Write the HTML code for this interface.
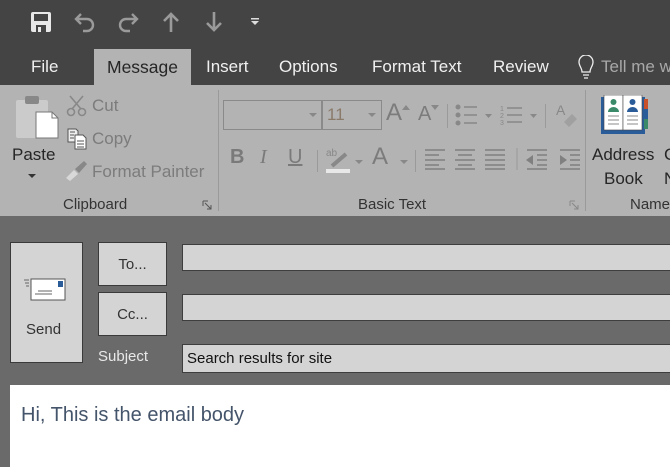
<!DOCTYPE html>
<html><head><meta charset="utf-8"><style>
*{margin:0;padding:0;box-sizing:border-box}
body{width:670px;height:465px;overflow:hidden;background:#6a6a6a;font-family:"Segoe UI","Liberation Sans",sans-serif;position:relative}
.a{position:absolute}
.top{left:0;top:0;width:670px;height:85px;background:#444}
.tab{top:57px;font-size:17px;color:#f0f0f0;white-space:nowrap}
.rib{left:0;top:85px;width:670px;height:131px;background:#b3b3b3}
.g{color:#7c7c7c;font-size:17px;white-space:nowrap}
.d{color:#262626;font-size:17px;white-space:nowrap}
.sep{width:1px;background:#9a9a9a}
.box{background:#d4d4d4;border:1px solid #3e3e3e}
.btn{background:#d4d4d4;border:1px solid #3a3a3a;color:#333;font-size:15px;text-align:center}
</style></head><body>
<div class="a top"></div>
<svg class="a" style="left:30px;top:11px" width="22" height="22" viewBox="0 0 22 22"><rect x="1" y="1" width="20" height="20" rx="2" fill="#e8e8e8"/><rect x="4" y="3" width="14" height="7" fill="#444"/><rect x="6" y="14" width="10" height="7" fill="#444"/><rect x="8" y="16" width="3" height="5" fill="#e8e8e8"/></svg>
<svg class="a" style="left:73px;top:11px" width="24" height="22" viewBox="0 0 24 22"><path d="M8 3 L3 8 L8 13 M3 8 H14 a6 6 0 0 1 0 12 H10" fill="none" stroke="#9a9a9a" stroke-width="2.4"/></svg>
<svg class="a" style="left:116px;top:11px" width="24" height="22" viewBox="0 0 24 22"><path d="M16 3 L21 8 L16 13 M21 8 H10 a6 6 0 0 0 0 12 H14" fill="none" stroke="#9a9a9a" stroke-width="2.4"/></svg>
<svg class="a" style="left:162px;top:11px" width="18" height="22" viewBox="0 0 18 22"><path d="M9 21 V3 M2 10 L9 3 L16 10" fill="none" stroke="#9a9a9a" stroke-width="2.6"/></svg>
<svg class="a" style="left:205px;top:11px" width="18" height="22" viewBox="0 0 18 22"><path d="M9 1 V19 M2 12 L9 19 L16 12" fill="none" stroke="#9a9a9a" stroke-width="2.6"/></svg>
<svg class="a" style="left:250px;top:18px" width="10" height="8" viewBox="0 0 10 8"><rect x="1" y="0" width="8" height="1.5" fill="#ddd"/><path d="M1 3 H9 L5 7Z" fill="#ddd"/></svg>
<div class="a" style="left:94px;top:49px;width:97px;height:37px;background:#b3b3b3"></div>
<div class="a tab" style="left:31px">File</div>
<div class="a tab" style="left:107px;color:#262626;font-size:17.5px">Message</div>
<div class="a tab" style="left:206px">Insert</div>
<div class="a tab" style="left:279px">Options</div>
<div class="a tab" style="left:372px">Format Text</div>
<div class="a tab" style="left:493px">Review</div>
<svg class="a" style="left:577px;top:55px" width="18" height="24" viewBox="0 0 18 24"><path d="M5 17 C5 13 2 11 2 7 a7 7 0 0 1 14 0 c0 4 -3 6 -3 10 Z M6 20 H12 M7 23 H11" fill="none" stroke="#eee" stroke-width="1.3"/></svg>
<div class="a tab" style="left:601px;color:#a8a8a8">Tell me w</div>
<div class="a rib"></div>
<svg class="a" style="left:14px;top:94px" width="46" height="46" viewBox="0 0 46 46"><rect x="2" y="6" width="32" height="38" rx="2" fill="#cbcbcb"/><rect x="11" y="2" width="14" height="8" rx="2" fill="#888"/><path d="M22 18 H38 L44 24 V44 H22Z" fill="#fff" stroke="#777"/><path d="M38 18 V24 H44" fill="none" stroke="#777"/></svg>
<div class="a d" style="left:12px;top:145px">Paste</div>
<svg class="a" style="left:28px;top:174px" width="8" height="5"><path d="M0 0 H8 L4 4Z" fill="#333"/></svg>
<svg class="a" style="left:66px;top:95px" width="22" height="22" viewBox="0 0 22 22"><circle cx="5" cy="17" r="3.5" fill="none" stroke="#888" stroke-width="1.6"/><circle cx="16" cy="17" r="3.5" fill="none" stroke="#888" stroke-width="1.6"/><path d="M6 14 L17 1 M15 14 L4 1" stroke="#888" stroke-width="1.6"/></svg>
<div class="a g" style="left:92px;top:96px">Cut</div>
<svg class="a" style="left:66px;top:128px" width="22" height="22" viewBox="0 0 22 22"><path d="M2 1 H10 L12 3 V14 H2Z" fill="#eee" stroke="#555"/><path d="M9 7 H17 L20 10 V21 H9Z" fill="#fff" stroke="#555"/><path d="M4 4H9M4 7H8M4 10H8M11 13H18M11 16H18M11 19H18" stroke="#555"/></svg>
<div class="a g" style="left:92px;top:129px">Copy</div>
<svg class="a" style="left:65px;top:160px" width="24" height="22" viewBox="0 0 24 22"><path d="M1 18 L9 10 L13 14 L5 21Z" fill="#d8d8d8"/><path d="M10 9 L19 1 L22 4 L14 13Z" fill="#888"/></svg>
<div class="a g" style="left:92px;top:162px">Format Painter</div>
<div class="a d" style="left:63px;top:196px;font-size:15px;color:#333">Clipboard</div>
<svg class="a" style="left:202px;top:200px" width="10" height="10"><path d="M1 1H6M1 1V6M3 3L9 9M9 5V9H5" fill="none" stroke="#555"/></svg>
<div class="a sep" style="left:218px;top:90px;height:121px"></div>
<div class="a" style="left:223px;top:100px;width:99px;height:30px;border:1px solid #8a8a8a"></div>
<svg class="a" style="left:309px;top:113px" width="8" height="5"><path d="M0 0H8L4 4Z" fill="#888"/></svg>
<div class="a" style="left:322px;top:100px;width:60px;height:30px;border:1px solid #8a8a8a"></div>
<div class="a g" style="left:327px;top:105px;color:#8a7a6a">11</div>
<svg class="a" style="left:368px;top:113px" width="8" height="5"><path d="M0 0H8L4 4Z" fill="#888"/></svg>
<div class="a g" style="left:386px;top:99px;font-size:24px">A</div><svg class="a" style="left:402px;top:105px" width="8" height="5"><path d="M0 5L4 0L8 5Z" fill="#888"/></svg>
<div class="a g" style="left:418px;top:103px;font-size:20px">A</div><svg class="a" style="left:431px;top:105px" width="8" height="5"><path d="M0 0H8L4 5Z" fill="#888"/></svg>
<div class="a sep" style="left:447px;top:104px;height:24px"></div>
<svg class="a" style="left:455px;top:104px" width="40" height="22" viewBox="0 0 40 22"><g fill="#888"><circle cx="3" cy="3" r="2.5"/><circle cx="3" cy="11" r="2.5"/><circle cx="3" cy="19" r="2.5"/></g><path d="M9 3H22M9 11H22M9 19H22" stroke="#888" stroke-width="1.5"/><path d="M30 10H37L33.5 14Z" fill="#888"/></svg>
<svg class="a" style="left:500px;top:103px" width="40" height="24" viewBox="0 0 40 24"><text x="0" y="8" font-size="7" fill="#888" font-family="Liberation Sans">1</text><text x="0" y="15" font-size="7" fill="#888" font-family="Liberation Sans">2</text><text x="0" y="22" font-size="7" fill="#888" font-family="Liberation Sans">3</text><path d="M7 5H22M7 12H22M7 19H22" stroke="#888" stroke-width="1.5"/><path d="M30 11H37L33.5 15Z" fill="#888"/></svg>
<div class="a sep" style="left:545px;top:104px;height:24px"></div>
<svg class="a" style="left:556px;top:102px" width="22" height="26" viewBox="0 0 22 26"><text x="0" y="13" font-size="14" fill="#888" font-family="Liberation Sans">A</text><path d="M8 20 L16 12 L21 17 L13 25Z" fill="#a0a0a0"/></svg>
<div class="a" style="left:230px;top:146px;font-size:20px;font-weight:bold;color:#7a7a7a">B</div>
<div class="a" style="left:260px;top:146px;font-size:20px;font-style:italic;font-family:'Liberation Serif',serif;color:#7a7a7a">I</div>
<div class="a" style="left:288px;top:146px;font-size:20px;text-decoration:underline;color:#7a7a7a">U</div>
<div class="a sep" style="left:317px;top:150px;height:22px"></div>
<svg class="a" style="left:326px;top:146px" width="26" height="28" viewBox="0 0 26 28"><text x="0" y="10" font-size="10" fill="#888" font-family="Liberation Sans">ab</text><path d="M6 20 L20 8" stroke="#888" stroke-width="4"/><rect x="0" y="23" width="24" height="4" fill="#e8e8e8"/></svg>
<svg class="a" style="left:355px;top:160px" width="8" height="5"><path d="M0 0H8L4 4Z" fill="#888"/></svg>
<div class="a g" style="left:372px;top:143px;font-size:24px">A</div>
<svg class="a" style="left:400px;top:160px" width="8" height="5"><path d="M0 0H8L4 4Z" fill="#888"/></svg>
<div class="a sep" style="left:415px;top:150px;height:22px"></div>
<svg class="a" style="left:425px;top:148px" width="160" height="22" viewBox="0 0 160 22"><g stroke="#808080" stroke-width="1.4"><path d="M0 2H20M0 7H14M0 12H20M0 17H14M0 21H20"/><path d="M30 2H50M33 7H47M30 12H50M33 17H47M30 21H50"/><path d="M60 2H80M60 7H80M60 12H80M60 17H80M60 21H80"/><path d="M102 2H122M112 7H122M112 12H122M112 17H122M102 21H122"/><path d="M135 2H155M145 7H155M145 12H155M145 17H155M135 21H155"/></g><path d="M101 12L108 7V17Z" fill="#808080"/><path d="M142 12L135 7V17Z" fill="#808080"/><line x1="92" y1="0" x2="92" y2="22" stroke="#9a9a9a"/></svg>
<div class="a d" style="left:358px;top:196px;font-size:15px;color:#333">Basic Text</div>
<svg class="a" style="left:569px;top:200px" width="10" height="10"><path d="M1 1H6M1 1V6M3 3L9 9M9 5V9H5" fill="none" stroke="#888"/></svg>
<div class="a sep" style="left:585px;top:90px;height:121px"></div>
<svg class="a" style="left:601px;top:95px" width="48" height="40" viewBox="0 0 48 40"><rect x="0" y="2" width="44" height="37" fill="#2b5c9a"/><rect x="43" y="4" width="4" height="10" fill="#c8502a"/><rect x="43" y="14" width="4" height="10" fill="#2b5c9a"/><rect x="43" y="24" width="4" height="10" fill="#3a8a6a"/><rect x="3" y="0" width="19" height="35" fill="#fff" stroke="#444" stroke-width=".6"/><rect x="22" y="0" width="19" height="35" fill="#fff" stroke="#444" stroke-width=".6"/><circle cx="12.5" cy="7" r="3" fill="#3a8a6a"/><path d="M7 17 a5.5 5 0 0 1 11 0Z" fill="#3a8a6a"/><circle cx="31.5" cy="7" r="3" fill="#2b5c9a"/><path d="M26 17 a5.5 5 0 0 1 11 0Z" fill="#2b5c9a"/><path d="M7 21H18M7 25H18M7 29H18M26 21H37M26 25H37M26 29H37" stroke="#666" stroke-width=".8"/></svg>
<div class="a d" style="left:592px;top:145px">Address</div>
<div class="a d" style="left:604px;top:169px">Book</div>
<div class="a d" style="left:664px;top:145px">C</div>
<div class="a d" style="left:664px;top:169px">N</div>
<div class="a d" style="left:630px;top:196px;font-size:15px;color:#333">Name</div>
<div class="a btn" style="left:10px;top:242px;width:73px;height:121px"></div>
<svg class="a" style="left:24px;top:278px" width="44" height="24" viewBox="0 0 44 24"><rect x="7" y="1" width="34" height="21" fill="#fff" stroke="#555"/><rect x="34" y="3" width="5" height="6" fill="#2b5c9a"/><path d="M0 2H5M1 5H5M2 8H5M14 13H28M11 16H28" stroke="#666"/></svg>
<div class="a" style="left:26px;top:321px;font-size:15px;color:#333">Send</div>
<div class="a btn" style="left:98px;top:242px;width:69px;height:44px;line-height:44px">To...</div>
<div class="a btn" style="left:98px;top:292px;width:69px;height:44px;line-height:44px">Cc...</div>
<div class="a" style="left:98px;top:348px;font-size:15px;color:#e8e8e8">Subject</div>
<div class="a box" style="left:182px;top:244px;width:490px;height:27px"></div>
<div class="a box" style="left:182px;top:294px;width:490px;height:27px"></div>
<div class="a box" style="left:182px;top:344px;width:490px;height:29px"></div>
<div class="a" style="left:187px;top:350px;font-size:15px;color:#111">Search results for site</div>
<div class="a" style="left:10px;top:385px;width:662px;height:82px;background:#fff"></div>
<div class="a" style="left:21px;top:404px;font-size:20px;color:#44546a">Hi, This is the email body</div>
</body></html>
